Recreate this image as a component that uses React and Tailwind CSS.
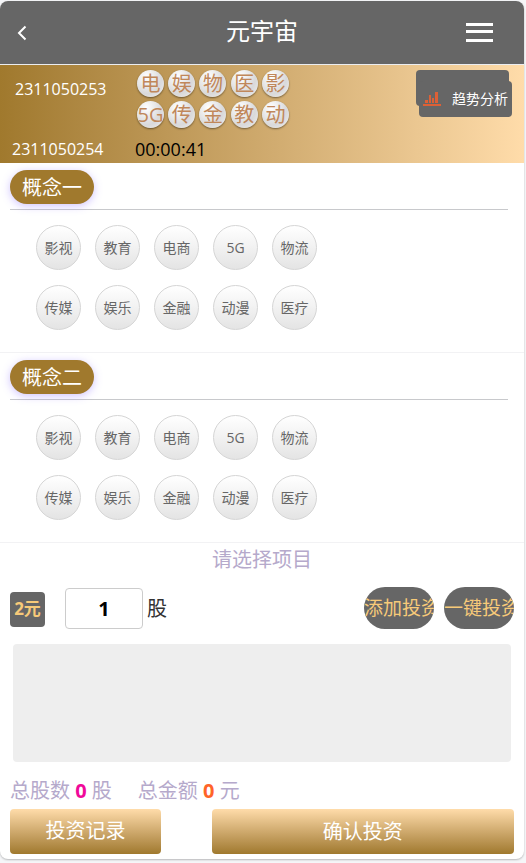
const RESULT = ["电", "娱", "物", "医", "影", "5G", "传", "金", "教", "动"];
const OPTIONS = ["影视", "教育", "电商", "5G", "物流", "传媒", "娱乐", "金融", "动漫", "医疗"];

function Header() {
  return (
    <header className="flex items-center justify-between h-16 pl-4 pr-[31px] bg-[#666] border-b border-[#ebedf0] text-white">
      <button type="button" aria-label="返回" className="w-[42px] h-8 flex items-center">
        <svg width="12" height="16" viewBox="0 0 12 16" fill="none" stroke="currentColor" strokeWidth="2" aria-hidden="true">
          <path d="M9.5 1.5 3 8l6.5 6.5" />
        </svg>
      </button>
      <h1 className="pb-1 text-2xl leading-8">元宇宙</h1>
      <button type="button" aria-label="菜单">
        <svg width="27" height="20" viewBox="0 0 27 20" fill="currentColor" aria-hidden="true">
          <path d="M0 0h27v3H0zM0 7h27v3H0zM0 16h27v3H0z" />
        </svg>
      </button>
    </header>
  );
}

function TrendButton() {
  return (
    <button type="button" className="relative pl-[3px] pt-[11px] text-white">
      <span className="absolute left-0 top-0 w-[93px] h-9 rounded bg-[#666]" />
      <span className="relative flex items-center justify-between w-[93px] h-9 pl-1 pr-1 rounded bg-[#666] text-sm">
        <svg width="18" height="14" viewBox="0 0 18 14" fill="#dd6036" aria-hidden="true">
          <path d="M0 12h18v2H0zM2 8h3v3H2zM6 3h2v8H6zM9 6h2v5H9zM12 0h3v11h-3z" />
        </svg>
        趋势分析
      </span>
    </button>
  );
}

function Draw() {
  return (
    <section className="h-[98px] pl-3 pr-3 pt-[5px] bg-linear-to-r from-[#a0792d] to-[#ffdcaa]">
      <div className="flex items-start">
        <p className="w-[123px] pl-[3px] pt-[7px] text-base leading-6 text-white">2311050253</p>
        <div className="grid grid-cols-5 justify-items-center w-[156px] gap-y-1">
          {RESULT.map((name) => (
            <span
              key={name}
              className="flex items-center justify-center size-[27px] rounded-full bg-radial-[at_35%_25%] from-white via-[#d9d9da] via-60% to-[#f1f1f1] shadow-[0_1px_2px_rgba(0,0,0,0.45)] text-xl leading-none text-[#c0875a]"
            >
              {name}
            </span>
          ))}
        </div>
        <div className="ml-auto">
          <TrendButton />
        </div>
      </div>
      <div className="flex items-center mt-[9px] leading-6">
        <p className="w-[123px] text-base leading-6 text-white">2311050254</p>
        <time className="text-lg leading-6 text-black">00:00:41</time>
      </div>
    </section>
  );
}

function Concept({ title }) {
  return (
    <section className="pt-[7px] pb-[22px] border-b border-[#f2f2f4]">
      <div className="ml-2.5 mr-4 pb-[5px] border-b border-[#c8c9cc]">
        <h2 className="w-fit h-[34px] px-3 rounded-full bg-[#a0792d] text-xl leading-9 text-white shadow-[0_2px_8px_rgba(120,90,255,0.35)]">
          {title}
        </h2>
      </div>
      <div className="grid grid-cols-[repeat(5,45px)] gap-x-3.5 gap-y-[15px] pl-9 pt-[15px]">
        {OPTIONS.map((name) => (
          <button
            key={name}
            type="button"
            className="size-[45px] rounded-full border border-[#d5d5d5] bg-linear-to-b from-white to-[#e4e4e4] text-sm leading-none text-[#666]"
          >
            {name}
          </button>
        ))}
      </div>
    </section>
  );
}

function PillButton({ children }) {
  return (
    <button
      type="button"
      className="w-[70px] h-[42px] rounded-full bg-[#666] overflow-hidden whitespace-nowrap text-left text-[19px] text-[#f7ca79]"
    >
      {children}
    </button>
  );
}

function BetForm() {
  return (
    <form className="px-2.5 pb-[5px]" onSubmit={(e) => e.preventDefault()}>
      <p className="pt-0.5 text-center text-xl leading-[30px] text-[#b5a9cb]">请选择项目</p>
      <div className="flex items-center mt-3 h-[42px]">
        <span className="flex items-center justify-center size-[35px] mt-0.5 rounded bg-[#666] text-[17px] font-bold text-[#f7ca79]">
          2元
        </span>
        <input
          id="shares"
          type="text"
          inputMode="numeric"
          defaultValue="1"
          className="w-[78px] h-[41px] ml-5 rounded border border-[#ccc] bg-white text-center text-xl font-bold text-black"
        />
        <label htmlFor="shares" className="ml-1 pt-0.5 text-xl text-[#323233]">股</label>
        <div className="flex gap-2.5 ml-auto">
          <PillButton>添加投资</PillButton>
          <PillButton>一键投资</PillButton>
        </div>
      </div>
      <div className="mx-[3px] mt-[15px] h-[118px] rounded bg-[#eee]" />
      <p className="mt-3.5 flex gap-[26px] text-xl leading-[30px] text-[#b5a9cb]">
        <span>总股数 <b className="font-bold text-[#f0099a]">0</b> 股</span>
        <span>总金额 <b className="font-bold text-[#ff6428]">0</b> 元</span>
      </p>
      <div className="flex justify-between mt-[3px] text-xl text-white">
        <button type="button" className="w-[30%] h-[45px] pb-0.5 rounded bg-linear-to-b from-[#ffdcaa] to-[#a0792d]">
          投资记录
        </button>
        <button type="submit" className="w-[60%] h-[45px] rounded bg-linear-to-b from-[#ffdcaa] to-[#a0792d]">
          确认投资
        </button>
      </div>
    </form>
  );
}

export default function App() {
  return (
    <div className="min-h-screen pt-px pr-0.5 pb-1 bg-[#f5f6f8] font-['Open_Sans','Noto_Sans_CJK_SC',sans-serif]">
      <main className="rounded-lg overflow-hidden bg-white shadow-[0_1px_2px_rgba(0,0,0,0.25)]">
        <Header />
        <Draw />
        <Concept title="概念一" />
        <Concept title="概念二" />
        <BetForm />
      </main>
    </div>
  );
}
